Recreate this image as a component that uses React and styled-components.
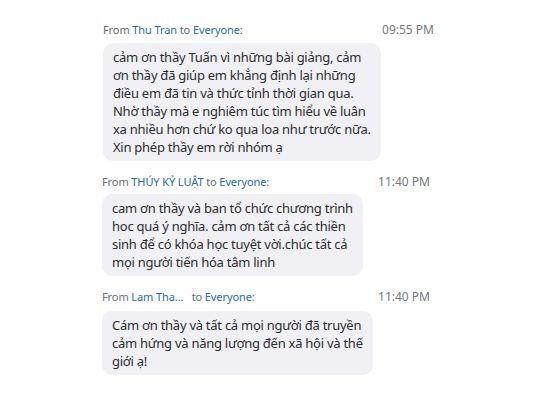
import React from "react";
import styled, { createGlobalStyle } from "styled-components";

const Global = createGlobalStyle`
  html, body { margin: 0; padding: 0; background: #ffffff; }
  body { font-family: "Noto Sans", "Open Sans", sans-serif; }
`;

const Page = styled.div`
  width: 533px;
  height: 400px;
  box-sizing: border-box;
  padding: 23px 0 0 102px;
  display: flex;
  flex-direction: column;
  gap: 14px;
  background: #fff;
`;

const Message = styled.div`
  display: flex;
  flex-direction: column;
  gap: ${(p) => p.$gap}px;
  width: 331px;
  margin-left: ${(p) => p.$indent || 0}px;
`;

const Header = styled.div`
  display: flex;
  justify-content: space-between;
  align-items: baseline;
  font-size: 11px;
  line-height: 14px;
  letter-spacing: -0.1px;
  color: #676b70;
  padding-right: ${(p) => p.$timeRight || 0}px;
`;

const Name = styled.span`
  color: #2a6aab;
`;

const Time = styled.span`
  color: #76797e;
  font-size: 12px;
  letter-spacing: 0;
`;

const Bubble = styled.div`
  width: fit-content;
  background: #f1f1f5;
  border-radius: 10px;
  padding: 5px 10px;
  font-size: 13px;
  letter-spacing: -0.26px;
  line-height: 18px;
  color: #2c2c30;
`;

const Line = styled.span`
  display: block;
  white-space: nowrap;
`;

const messages = [
  {
    name: "Thu Tran",
    time: "09:55 PM",
    indent: 1,
    timeRight: 0,
    gap: 6,
    lines: [
      "cảm ơn thầy Tuấn vì những bài giảng, cảm",
      "ơn thầy đã giúp em khẳng định lại những",
      "điều em đã tin và thức tỉnh thời gian qua.",
      "Nhờ thầy mà e nghiêm túc tìm hiểu về luân",
      "xa nhiều hơn chứ ko qua loa như trước nữa.",
      "Xin phép thầy em rời nhóm ạ",
    ],
  },
  {
    name: "THÚY KỶ LUẬT",
    time: "11:40 PM",
    indent: 0,
    timeRight: 3,
    gap: 5,
    lines: [
      "cam ơn thầy và ban tổ chức chương trình",
      "hoc quá ý nghĩa. cảm ơn tất cả các thiền",
      "sinh để có khóa học tuyệt vời.chúc tất cả",
      "mọi người tiến hóa tâm linh",
    ],
  },
  {
    name: "Lam Tha...",
    spaced: true,
    time: "11:40 PM",
    indent: 0,
    timeRight: 3,
    gap: 7,
    lines: [
      "Cám ơn thầy và tất cả mọi người đã truyền",
      "cảm hứng và năng lượng đến xã hội và thế",
      "giới ạ!",
    ],
  },
];

export default function App() {
  return (
    <>
      <Global />
      <Page>
        {messages.map((m, i) => (
          <Message key={i} $indent={m.indent} $gap={m.gap}>
            <Header $timeRight={m.timeRight}>
              <span>
                From <Name>{m.name}</Name>
                {m.spaced ? "\u00a0\u00a0 " : " "}to <Name>Everyone</Name>:
              </span>
              <Time>{m.time}</Time>
            </Header>
            <Bubble>
              {m.lines.map((l, j) => (
                <Line key={j}>{l}</Line>
              ))}
            </Bubble>
          </Message>
        ))}
      </Page>
    </>
  );
}
